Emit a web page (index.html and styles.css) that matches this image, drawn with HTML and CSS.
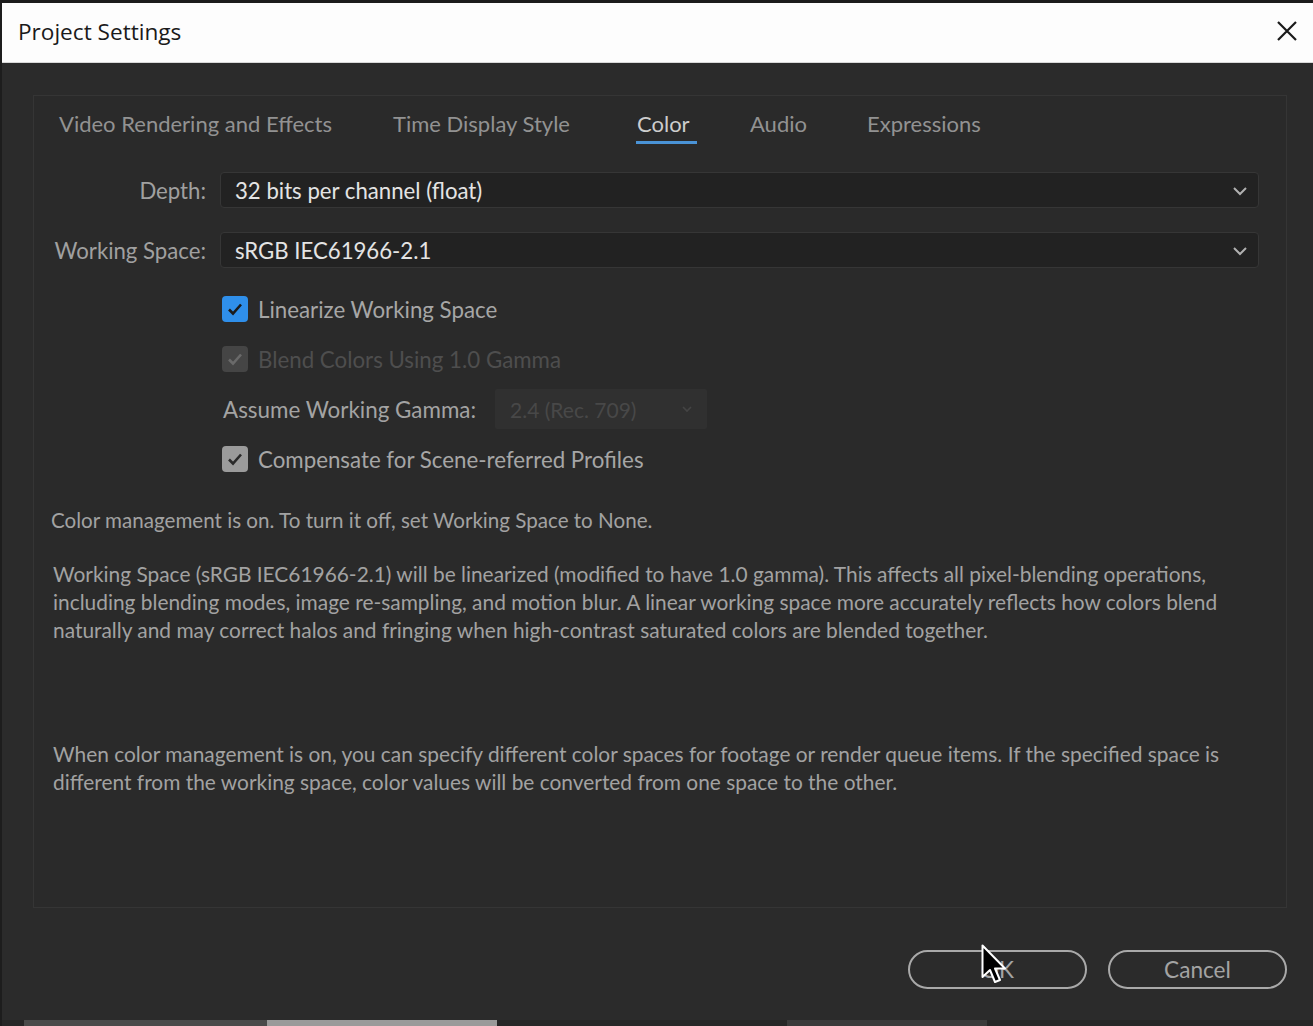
FILE: index.html
```html
<!DOCTYPE html>
<html>
<head>
<meta charset="utf-8">
<title>Project Settings</title>
<link rel="stylesheet" href="styles.css">
</head>
<body>
<div class="window">
  <div class="top-strip"></div>
  <div class="titlebar">
    <span class="title">Project Settings</span>
    <svg class="close" width="22" height="22" viewBox="0 0 22 22"><path d="M2 2 L20 20 M20 2 L2 20" stroke="#1a1a1a" stroke-width="2.2" fill="none"/></svg>
  </div>
  <div class="dialog">
    <div class="panel">
      <div class="tabs">
        <span class="tab">Video Rendering and Effects</span>
        <span class="tab">Time Display Style</span>
        <span class="tab active">Color</span>
        <span class="tab">Audio</span>
        <span class="tab">Expressions</span>
      </div>
      <div class="form">
        <label class="lbl">Depth:</label>
        <div class="select"><span>32 bits per channel (float)</span><svg class="chev" width="16" height="10" viewBox="0 0 16 10"><path d="M2 2 L8 8 L14 2" stroke="#b0b0b0" stroke-width="2" fill="none"/></svg></div>
        <label class="lbl">Working Space:</label>
        <div class="select"><span>sRGB IEC61966-2.1</span><svg class="chev" width="16" height="10" viewBox="0 0 16 10"><path d="M2 2 L8 8 L14 2" stroke="#b0b0b0" stroke-width="2" fill="none"/></svg></div>
      </div>
      <div class="options">
        <div class="opt">
          <span class="cb cb-blue"><svg width="26" height="26" viewBox="0 0 26 26"><path d="M7 13.5 L11 17.5 L19 8.5" stroke="#1b1b1b" stroke-width="2.6" fill="none"/></svg></span>
          <span class="opt-text">Linearize Working Space</span>
        </div>
        <div class="opt disabled">
          <span class="cb cb-dis"><svg width="26" height="26" viewBox="0 0 26 26"><path d="M7 13.5 L11 17.5 L19 8.5" stroke="#6a6a6a" stroke-width="2.6" fill="none"/></svg></span>
          <span class="opt-text">Blend Colors Using 1.0 Gamma</span>
        </div>
        <div class="opt gamma">
          <span class="gamma-lbl">Assume Working Gamma:</span>
          <div class="mini-select"><span>2.4 (Rec. 709)</span><svg width="12" height="8" viewBox="0 0 12 8"><path d="M2 2 L6 6 L10 2" stroke="#444" stroke-width="1.6" fill="none"/></svg></div>
        </div>
        <div class="opt">
          <span class="cb cb-grey"><svg width="26" height="26" viewBox="0 0 26 26"><path d="M7 13.5 L11 17.5 L19 8.5" stroke="#2a2a2a" stroke-width="2.6" fill="none"/></svg></span>
          <span class="opt-text">Compensate for Scene-referred Profiles</span>
        </div>
      </div>
      <p class="note first">Color management is on. To turn it off, set Working Space to None.</p>
      <p class="note second">Working Space (sRGB IEC61966-2.1) will be linearized (modified to have 1.0 gamma). This affects all pixel-blending operations,<br>including blending modes, image re-sampling, and motion blur. A linear working space more accurately reflects how colors blend<br>naturally and may correct halos and fringing when high-contrast saturated colors are blended together.</p>
      <p class="note last">When color management is on, you can specify different color spaces for footage or render queue items. If the specified space is<br>different from the working space, color values will be converted from one space to the other.</p>
    </div>
    <div class="buttons">
      <button class="btn">OK</button>
      <button class="btn">Cancel</button>
    </div>
  </div>
  <div class="bg-strip">
    <span class="bs1"></span><span class="bs2"></span><span class="bs3"></span><span class="bs4"></span><span class="bs5"></span>
  </div>
  <svg class="cursor" width="26" height="42" viewBox="0 0 26 42"><path d="M1.5 1.5 L1.5 33 L9 26 L14 38 L19 36 L14 24.5 L24 24.5 Z" fill="#000" stroke="#fff" stroke-width="2" stroke-linejoin="round"/></svg>
</div>
</body>
</html>
```
FILE: styles.css
```css
* { box-sizing: border-box; }
html, body { margin: 0; padding: 0; }
body {
  width: 1313px;
  height: 1026px;
  overflow: hidden;
  background: #2b2b2b;
  font-family: "Lato", "Open Sans", sans-serif;
}
.window {
  position: relative;
  width: 1313px;
  height: 1026px;
  display: flex;
  flex-direction: column;
  background: #2b2b2b;
  border-left: 2px solid #1d1d1d;
}
.top-strip {
  height: 3px;
  background: #1c1c1c;
}
.titlebar {
  height: 60px;
  background: #fdfdfd;
  border-bottom: 1px solid #d8d8d8;
  display: flex;
  align-items: center;
  justify-content: space-between;
  padding: 0 15px 0 16px;
}
.title {
  font-family: "Open Sans", sans-serif;
  font-size: 22.6px;
  color: #1a1a1a;
  margin-top: -2px;
}
.close { margin-top: -4px; }
.dialog {
  flex: 1;
  padding: 32px 24px 0 31px;
  display: flex;
  flex-direction: column;
}
.panel {
  width: 1254px;
  height: 813px;
  border: 1px solid #353535;
  background: #2a2a2a;
  display: flex;
  flex-direction: column;
}
.tabs {
  display: grid;
  grid-template-columns: 334px 244px 113px 117px auto;
  padding: 13px 0 0 25px;
  height: 76px;
  align-items: start;
}
.tab {
  justify-self: start;
  font-size: 22px;
  color: #929292;
  height: 35px;
  line-height: 30px;
}
.tab.active {
  color: #cdcdcd;
  border-bottom: 3px solid #4a93d6;
  padding-right: 7px;
  margin-left: -1px;
  padding-left: 1px;
}
.form {
  display: grid;
  grid-template-columns: 172px 1fr;
  column-gap: 14px;
  row-gap: 24px;
  padding-right: 27px;
  align-items: center;
}
.lbl {
  text-align: right;
  font-size: 22.2px;
  color: #a0a0a0;
}
.select {
  height: 36px;
  background: #222222;
  border: 1px solid #363636;
  border-radius: 4px;
  display: flex;
  align-items: center;
  justify-content: space-between;
  padding: 0 10px 0 14px;
  font-size: 22.2px;
  color: #e4e4e4;
}
.chev { margin-top: 1px; }
.options {
  display: flex;
  flex-direction: column;
  padding: 16px 0 0 188px;
}
.opt {
  height: 50px;
  display: flex;
  align-items: center;
  gap: 10px;
}
.cb {
  width: 26px;
  height: 26px;
  border-radius: 4px;
  display: inline-flex;
}
.cb-blue { background: #2f8fea; }
.cb-dis { background: #454545; }
.cb-grey { background: #9b9b9b; }
.opt-text {
  font-size: 22.3px;
  color: #a6a6a6;
}
.opt.disabled .opt-text { color: #4e4e4e; }
.gamma { gap: 19px; }
.gamma-lbl {
  font-size: 22.4px;
  color: #a3a3a3;
  margin-left: 1px;
}
.mini-select {
  width: 212px;
  height: 40px;
  background: #303030;
  border-radius: 2px;
  display: flex;
  align-items: center;
  justify-content: space-between;
  padding: 0 14px 0 15px;
  font-size: 21px;
  color: #484848;
}
.note {
  margin: 0;
  padding: 0 10px 0 19px;
  font-size: 20.9px;
  line-height: 28px;
  color: #a2a2a2;
  white-space: nowrap;
}
.note.first { margin-top: 22px; padding-left: 17px; font-size: 20.6px; }
.note.second { margin-top: 26px; }
.note.last { margin-top: 96px; }
.buttons {
  display: flex;
  justify-content: flex-end;
  gap: 21px;
  width: 1254px;
  margin-top: 42px;
}
.btn {
  width: 179px;
  height: 39px;
  border: 2px solid #a9a9a9;
  border-radius: 20px;
  background: transparent;
  color: #a3a3a3;
  font-family: "Lato", sans-serif;
  font-size: 22.6px;
  padding: 0;
}
.bg-strip {
  height: 6px;
  background: #262626;
  display: flex;
}
.bs1 { width: 22px; }
.bs2 { width: 243px; background: #4a4a4a; }
.bs3 { width: 230px; background: #9a9a9a; }
.bs4 { width: 290px; }
.bs5 { width: 200px; background: #3a3a3a; }
.cursor {
  position: absolute;
  left: 979px;
  top: 944px;
}
```
